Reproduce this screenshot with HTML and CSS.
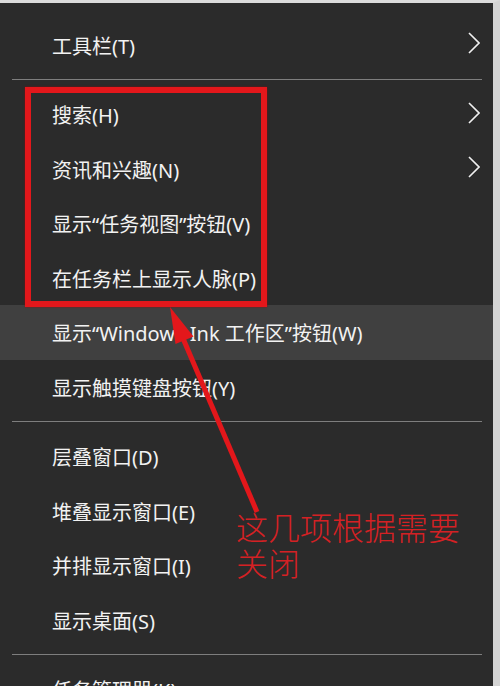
FILE: index.html
```html
<!DOCTYPE html>
<html lang="zh-CN">
<head>
    <meta charset="UTF-8">
    <meta name="viewport" content="width=device-width, initial-scale=1.0">
    <title>任务栏右键菜单</title>
    <link rel="stylesheet" href="styles.css">
</head>
<body>

    <div class="menu">
        <div class="item"><span>工具栏(T)</span><svg class="chev" viewBox="0 0 12 22"><polyline points="1,1 11,11 1,21"/></svg></div>
        <div class="sep"></div>
        <div class="item"><span>搜索(H)</span><svg class="chev" viewBox="0 0 12 22"><polyline points="1,1 11,11 1,21"/></svg></div>
        <div class="item"><span>资讯和兴趣(N)</span><svg class="chev" viewBox="0 0 12 22"><polyline points="1,1 11,11 1,21"/></svg></div>
        <div class="item"><span>显示“任务视图”按钮(V)</span></div>
        <div class="item"><span>在任务栏上显示人脉(P)</span></div>
        <div class="item hover"><span>显示“Windows Ink 工作区”按钮(W)</span></div>
        <div class="item"><span>显示触摸键盘按钮(Y)</span></div>
        <div class="sep"></div>
        <div class="item"><span>层叠窗口(D)</span></div>
        <div class="item"><span>堆叠显示窗口(E)</span></div>
        <div class="item"><span>并排显示窗口(I)</span></div>
        <div class="item"><span>显示桌面(S)</span></div>
        <div class="sep"></div>
        <div class="item"><span>任务管理器(K)</span></div>
    </div>

    <!-- annotation drawn over the screenshot -->
    <div class="mark-box"></div>
    <svg class="mark-arrow" width="500" height="686" viewBox="0 0 500 686">
        <line x1="257" y1="512" x2="182" y2="336"/>
        <polygon points="170,307 175.5,344 193.5,336.4"/>
    </svg>
    <div class="mark-note">这几项根据需要<br>关闭</div>

</body>
</html>
```

FILE: styles.css
```css
* { box-sizing: border-box; }
body { margin: 0; padding: 0; height: 686px; overflow: hidden; background-color: #2b2b2b; font-family: 'Noto Sans', 'Noto Sans CJK SC', sans-serif; position: relative; }
.menu { width: 500px; height: 686px; background: #2b2b2b; border-top: 3px solid #dcdcdc; border-right: 7px solid #d4d4d4; padding-top: 14.75px; }
.item { height: 54.5px; display: flex; align-items: center; justify-content: space-between; padding: 0 13px 0 52px; color: #f2f2f2; font-size: 20px; white-space: nowrap; }
.item.hover { background-color: #404040; }
.chev { width: 12px; height: 22px; margin-top: -4px; }
.chev polyline { fill: none; stroke: #f0f0f0; stroke-width: 1.6; }
.sep { height: 1px; margin: 7px 11px 7px 12px; background-color: #7e7e7e; }

.mark-box { position: absolute; left: 25px; top: 87px; width: 242px; height: 220px; border: 6px solid #e3171b; box-shadow: 0 0 2px rgba(160, 0, 0, 0.7); }
.mark-arrow { position: absolute; left: 0; top: 0; pointer-events: none; }
.mark-arrow line { stroke: #e3171b; stroke-width: 5; }
.mark-arrow polygon { fill: #e3171b; }
.mark-note { position: absolute; left: 236px; top: 508px; color: #d42124; font-family: 'Noto Sans CJK SC', sans-serif; font-weight: 300; font-size: 32px; line-height: 36px; }
```
